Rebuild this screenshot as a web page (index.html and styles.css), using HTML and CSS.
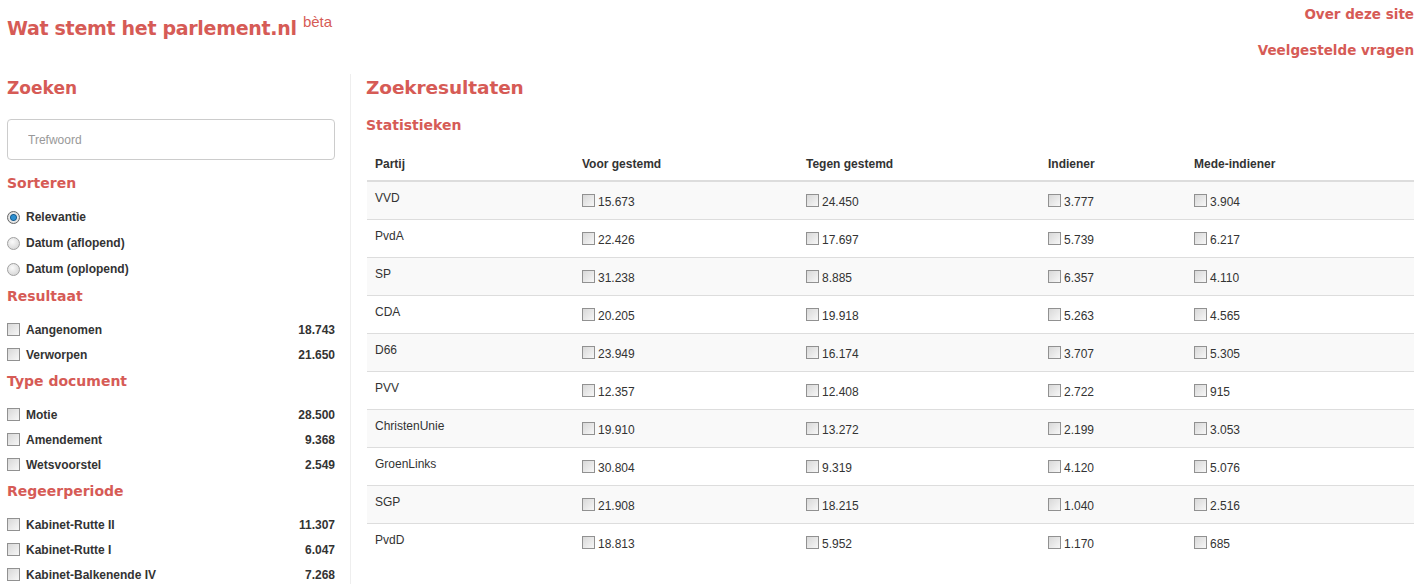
FILE: index.html
```html
<!DOCTYPE html>
<html lang="nl">
<head>
  <meta charset="UTF-8" />
  <title>Wat stemt het parlement.nl</title>
  <link rel="stylesheet" href="styles.css">
</head>
<body>
  <div class="top">
    <h1 class="brand">Wat stemt het parlement.nl <sup>bèta</sup></h1>
    <div class="top-links">
      <a href="#">Over deze site</a>
      <a href="#">Veelgestelde vragen</a>
    </div>
  </div>

  <div class="page">
    <div class="sidebar">
      <h2>Zoeken</h2>
      <input type="text" class="search" placeholder="Trefwoord">

      <h3>Sorteren</h3>
      <ul class="facet radios">
        <li><label><input type="radio" name="sort" checked> Relevantie</label></li>
        <li><label><input type="radio" name="sort"> Datum (aflopend)</label></li>
        <li><label><input type="radio" name="sort"> Datum (oplopend)</label></li>
      </ul>

      <h3>Resultaat</h3>
      <ul class="facet">
        <li><label><input type="checkbox"> Aangenomen</label><span class="count">18.743</span></li>
        <li><label><input type="checkbox"> Verworpen</label><span class="count">21.650</span></li>
      </ul>

      <h3>Type document</h3>
      <ul class="facet">
        <li><label><input type="checkbox"> Motie</label><span class="count">28.500</span></li>
        <li><label><input type="checkbox"> Amendement</label><span class="count">9.368</span></li>
        <li><label><input type="checkbox"> Wetsvoorstel</label><span class="count">2.549</span></li>
      </ul>

      <h3>Regeerperiode</h3>
      <ul class="facet">
        <li><label><input type="checkbox"> Kabinet-Rutte II</label><span class="count">11.307</span></li>
        <li><label><input type="checkbox"> Kabinet-Rutte I</label><span class="count">6.047</span></li>
        <li><label><input type="checkbox"> Kabinet-Balkenende IV</label><span class="count">7.268</span></li>
      </ul>
    </div>

    <div class="main">
      <h2>Zoekresultaten</h2>
      <h3>Statistieken</h3>
      <table class="stats">
        <thead>
          <tr>
            <th class="c1">Partij</th>
            <th class="c2">Voor gestemd</th>
            <th class="c3">Tegen gestemd</th>
            <th class="c4">Indiener</th>
            <th class="c5">Mede-indiener</th>
          </tr>
        </thead>
        <tbody>
          <tr><td>VVD</td><td><input type="checkbox">15.673</td><td><input type="checkbox">24.450</td><td><input type="checkbox">3.777</td><td><input type="checkbox">3.904</td></tr>
          <tr><td>PvdA</td><td><input type="checkbox">22.426</td><td><input type="checkbox">17.697</td><td><input type="checkbox">5.739</td><td><input type="checkbox">6.217</td></tr>
          <tr><td>SP</td><td><input type="checkbox">31.238</td><td><input type="checkbox">8.885</td><td><input type="checkbox">6.357</td><td><input type="checkbox">4.110</td></tr>
          <tr><td>CDA</td><td><input type="checkbox">20.205</td><td><input type="checkbox">19.918</td><td><input type="checkbox">5.263</td><td><input type="checkbox">4.565</td></tr>
          <tr><td>D66</td><td><input type="checkbox">23.949</td><td><input type="checkbox">16.174</td><td><input type="checkbox">3.707</td><td><input type="checkbox">5.305</td></tr>
          <tr><td>PVV</td><td><input type="checkbox">12.357</td><td><input type="checkbox">12.408</td><td><input type="checkbox">2.722</td><td><input type="checkbox">915</td></tr>
          <tr><td>ChristenUnie</td><td><input type="checkbox">19.910</td><td><input type="checkbox">13.272</td><td><input type="checkbox">2.199</td><td><input type="checkbox">3.053</td></tr>
          <tr><td>GroenLinks</td><td><input type="checkbox">30.804</td><td><input type="checkbox">9.319</td><td><input type="checkbox">4.120</td><td><input type="checkbox">5.076</td></tr>
          <tr><td>SGP</td><td><input type="checkbox">21.908</td><td><input type="checkbox">18.215</td><td><input type="checkbox">1.040</td><td><input type="checkbox">2.516</td></tr>
          <tr><td>PvdD</td><td><input type="checkbox">18.813</td><td><input type="checkbox">5.952</td><td><input type="checkbox">1.170</td><td><input type="checkbox">685</td></tr>
        </tbody>
      </table>
    </div>
  </div>
</body>
</html>
```

FILE: styles.css
```css
:root {
  --red: #d65b56;
  --text: #333;
  --line: #ddd;
}

body {
  margin: 0;
  font-family: "Liberation Sans", Arial, sans-serif;
  font-size: 12px;
  color: var(--text);
  background: white;
}

h1, h2, h3 {
  font-family: "DejaVu Sans", sans-serif;
  font-weight: bold;
  color: var(--red);
  margin: 0;
}

/* kop */
.top {
  display: flex;
  justify-content: space-between;
  padding: 0 8px 0 7px;
  height: 70px;
}

.brand {
  font-size: 19px;
  line-height: 24px;
  margin-top: 10px;
  letter-spacing: -0.3px;
}

.brand sup {
  font-family: "Liberation Sans", Arial, sans-serif;
  font-size: 15px;
  font-weight: normal;
  vertical-align: 8px;
  letter-spacing: 0;
}

.top-links {
  display: flex;
  flex-direction: column;
  align-items: flex-end;
  gap: 16px;
  padding-top: 4px;
}

.top-links a {
  font-family: "DejaVu Sans", sans-serif;
  font-weight: bold;
  font-size: 13.5px;
  line-height: 20px;
  color: var(--red);
  text-decoration: none;
}

/* indeling */
.page {
  display: flex;
}

.sidebar {
  width: 328px;
  padding-left: 7px;
  margin-right: 15px;
}

.sidebar h2 {
  font-size: 17px;
  line-height: 24px;
  margin-top: 6px;
}

.sidebar h3 {
  font-size: 14px;
  line-height: 24px;
  margin-top: 2px;
}

.search {
  display: block;
  width: 100%;
  height: 41px;
  box-sizing: border-box;
  margin: 19px 0 11px;
  padding: 0 20px;
  border: 1px solid #ccc;
  border-radius: 4px;
  font-family: "Liberation Sans", Arial, sans-serif;
  font-size: 12px;
  color: var(--text);
}

.search::placeholder {
  color: #999;
}

.facet {
  list-style: none;
  margin: 9px 0 0;
  padding: 0;
}

.facet li {
  display: flex;
  justify-content: space-between;
  align-items: center;
  height: 25px;
  font-weight: bold;
}

.facet.radios li {
  height: 26px;
}

.facet label {
  display: flex;
  align-items: center;
  gap: 6px;
}

.count {
  font-weight: bold;
}

input[type="checkbox"], input[type="radio"] {
  appearance: none;
  -webkit-appearance: none;
  margin: 0;
  width: 13px;
  height: 13px;
  box-sizing: border-box;
  border: 1px solid #919191;
  background: linear-gradient(135deg, #d8d8d8, #f7f7f7);
  flex: none;
}

input[type="radio"] {
  border-radius: 50%;
  border-color: #a0a0a0;
  background: radial-gradient(circle at 40% 35%, #fafafa, #cfcfcf);
}

input[type="radio"]:checked {
  background: radial-gradient(circle, #2d8fd0 0 2px, #165e92 3px, #e8e8e8 4px, #cfcfcf);
  border-color: #666;
}

/* resultaten */
.main {
  flex: 1;
  border-left: 1px solid #eee;
  padding: 0 8px 0 16px;
  margin-top: 4px;
}

.main h2 {
  font-size: 18.5px;
  line-height: 24px;
  margin: 2px 0 0 -1px;
  letter-spacing: -0.1px;
}

.main h3 {
  font-size: 14px;
  line-height: 24px;
  margin: 13px 0 0 -1px;
}

.stats {
  width: 100%;
  border-collapse: collapse;
  margin-top: 10px;
}

.stats th {
  text-align: left;
  padding: 9px 8px 7px;
  line-height: 17px;
  border-bottom: 2px solid var(--line);
}

.c1 { width: 191px; }
.c2 { width: 208px; }
.c3 { width: 226px; }
.c4 { width: 130px; }

.stats td {
  padding: 8px 8px 12px;
  line-height: 17px;
  border-top: 1px solid var(--line);
  vertical-align: top;
}

.stats td + td {
  padding-top: 12px;
  padding-bottom: 8px;
}

.stats tbody tr:first-child td {
  border-top: none;
}

.stats tbody tr:nth-child(odd) {
  background: #f9f9f9;
}

.stats td input {
  vertical-align: -1px;
  margin-right: 3px;
}
```
